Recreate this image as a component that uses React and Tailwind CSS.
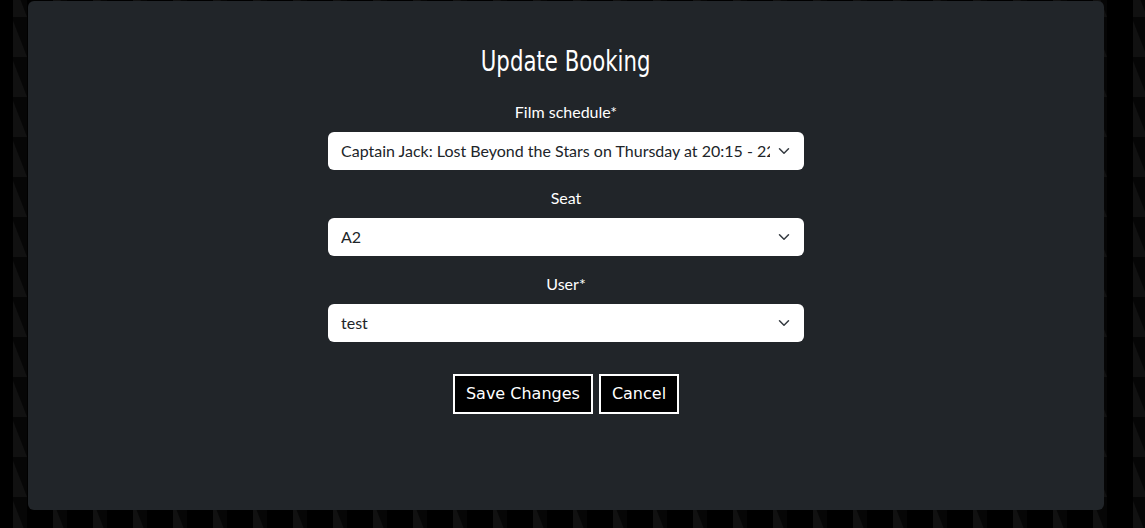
import { useState } from 'react';

function Chevron() {
  return (
    <svg width="16" height="12" viewBox="0 0 16 16" className="pointer-events-none">
      <path fill="none" stroke="#343a40" strokeLinecap="round" strokeLinejoin="round" strokeWidth="2" d="m2 5 6 6 6-6" />
    </svg>
  );
}

function Campo({ etiqueta, valor, onChange, opciones }) {
  return (
    <div className="flex flex-col items-center w-full">
      <label className="text-white text-[16px] leading-6 mb-2 font-['Lato',sans-serif]">{etiqueta}</label>
      <div className="relative w-full">
        <select
          value={valor}
          onChange={e => onChange(e.target.value)}
          className="appearance-none w-full h-[38px] bg-white rounded-md pl-[13px] pr-[34px] text-[16px] text-[#212529] font-['Lato',sans-serif] outline-none overflow-hidden whitespace-nowrap"
        >
          {opciones.map(o => <option key={o} value={o}>{o}</option>)}
        </select>
        <div className="absolute right-[12px] top-0 h-full flex items-center pointer-events-none">
          <Chevron />
        </div>
      </div>
    </div>
  );
}

export default function App() {
  const [horario, setHorario] = useState('Captain Jack: Lost Beyond the Stars on Thursday at 20:15 - 22:30');
  const [asiento, setAsiento] = useState('A2');
  const [usuario, setUsuario] = useState('test');

  return (
    <div className="min-h-screen bg-black relative overflow-hidden">
      {/* fondo con triángulos */}
      <svg className="absolute inset-0 w-full h-full" aria-hidden="true">
        <defs>
          <pattern id="tri" width="40" height="40" patternUnits="userSpaceOnUse" x="0" y="20">
            <rect x="13" y="0" width="14" height="40" fill="#060606" />
            <polygon points="13,1 13,37 27,37" fill="#111111" />
          </pattern>
        </defs>
        <rect width="100%" height="100%" fill="url(#tri)" />
      </svg>

      <div className="relative pl-[28px] pt-px w-[1104px]">
        <div className="bg-[#212529] rounded-md h-[509px] flex flex-col items-center pt-[43px]">
          <h2 className="text-white text-[28px] leading-9 font-['DejaVu_Sans',sans-serif] mb-[20px]">
            <span className="inline-block scale-x-[0.76] origin-center">Update Booking</span>
          </h2>

          <div className="w-[476px] flex flex-col gap-4">
            <Campo etiqueta="Film schedule*" valor={horario} onChange={setHorario}
              opciones={['Captain Jack: Lost Beyond the Stars on Thursday at 20:15 - 22:30']} />
            <Campo etiqueta="Seat" valor={asiento} onChange={setAsiento} opciones={['A1', 'A2', 'A3']} />
            <Campo etiqueta="User*" valor={usuario} onChange={setUsuario} opciones={['test', 'admin']} />
          </div>

          <div className="flex gap-[6px] mt-8 font-['DejaVu_Sans',sans-serif]">
            <button className="bg-black text-white border-2 border-white h-[40px] px-[11px] text-[16px]">Save Changes</button>
            <button className="bg-black text-white border-2 border-white h-[40px] px-[11px] text-[16px]">Cancel</button>
          </div>
        </div>
      </div>
    </div>
  );
}
